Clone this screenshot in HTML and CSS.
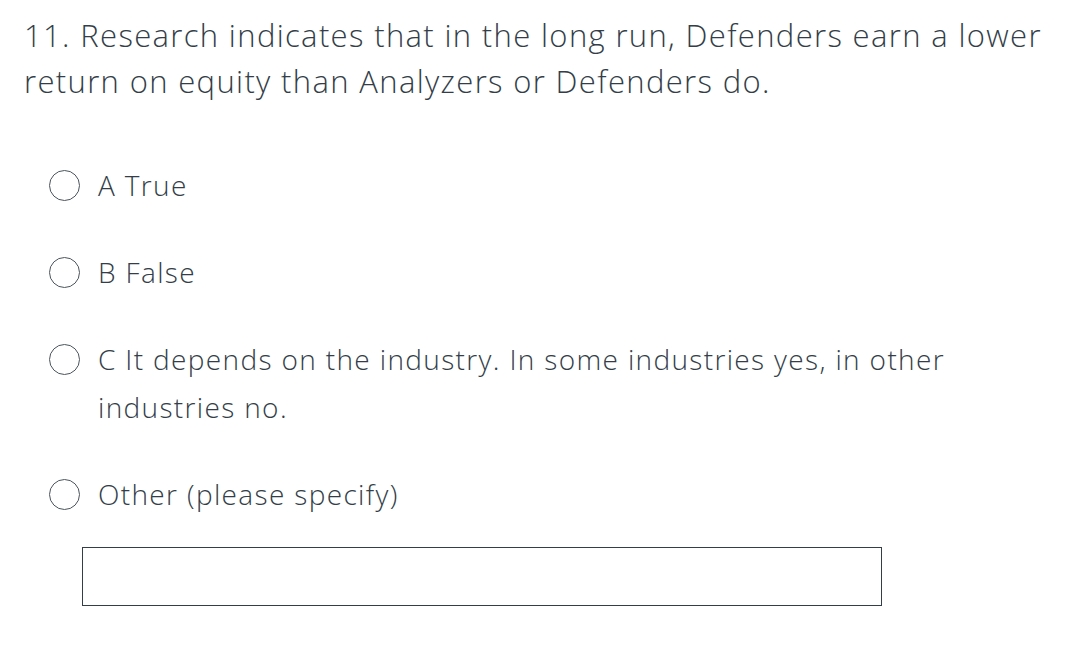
FILE: index.html
```html
<!DOCTYPE html>
<html>
<head>
<meta charset="utf-8">
<link rel="stylesheet" href="styles.css">
</head>
<body>
<div class="question">
  <h1 class="title">11. Research indicates that in the long run, Defenders earn a lower return on equity than Analyzers or Defenders do.</h1>
  <div class="options">
    <label class="option"><span class="radio"></span><span class="label">A True</span></label>
    <label class="option"><span class="radio"></span><span class="label">B False</span></label>
    <label class="option"><span class="radio"></span><span class="label">C It depends on the industry. In some industries yes, in other industries no.</span></label>
    <label class="option"><span class="radio"></span><span class="label">Other (please specify)</span></label>
    <div class="other-box"></div>
  </div>
</div>
</body>
</html>
```
FILE: styles.css
```css
html, body {
  margin: 0;
  padding: 0;
  background: #ffffff;
}
body {
  font-family: "Open Sans", "Liberation Sans", sans-serif;
  color: #333e48;
}
.question {
  padding: 12px 24px 0 24px;
}
.title {
  margin: 0;
  font-weight: 350;
  font-size: 31px;
  letter-spacing: 1.35px;
  line-height: 46px;
  width: 1040px;
}
.options {
  margin-top: 57px;
  display: flex;
  flex-direction: column;
  gap: 39px;
}
.option {
  display: flex;
  align-items: flex-start;
  gap: 18px;
  padding-left: 25px;
  font-size: 28px;
  font-weight: 350;
  letter-spacing: 1.35px;
  line-height: 48px;
}
.radio {
  flex: none;
  width: 31px;
  height: 31px;
  margin-top: 9px;
  border: 1.5px solid #4a545d;
  border-radius: 50%;
  box-sizing: border-box;
}
.label {
  max-width: 880px;
}
.other-box {
  margin-left: 58px;
  margin-top: -10px;
  width: 800px;
  height: 59px;
  box-sizing: border-box;
  border: 1.5px solid #333e48;
}
```
